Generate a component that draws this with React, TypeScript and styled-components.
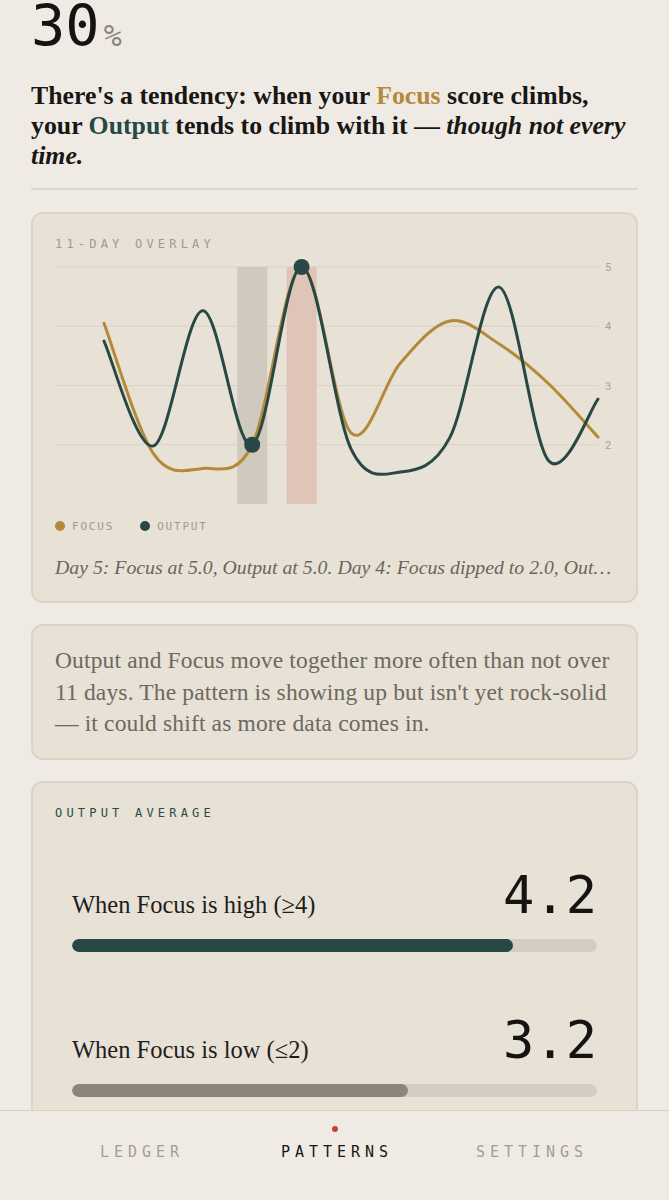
import React from 'react'
import styled, { createGlobalStyle } from 'styled-components'

const GlobalStyle = createGlobalStyle`
  html, body {
    margin: 0;
    padding: 0;
    background: #efebe4;
  }
  body {
    font-family: "Liberation Serif", serif;
    color: #1c1a17;
  }
`

const colors = {
  focus: '#b5893a',
  output: '#284845',
  muted: '#9d978d',
}

const focusData = [4.05, 1.85, 1.6, 2.0, 5.0, 2.2, 3.38, 4.09, 3.7, 3.03, 2.13]
const outputData = [3.75, 1.98, 4.26, 2.0, 5.0, 1.93, 1.54, 2.12, 4.66, 1.73, 2.77]

const chart = {
  width: 559,
  height: 250,
  top: 8,
  unit: 59.25,
  left: 49,
  step: 49.4,
  gridRight: 543,
}

const px = (i: number) => chart.left + i * chart.step
const py = (v: number) => chart.top + (5 - v) * chart.unit

// catmull-rom through every point
const smoothPath = (data: number[]) => {
  const pts = data.map((v, i) => [px(i), py(v)])
  let d = `M ${pts[0][0]} ${pts[0][1]}`
  for (let i = 0; i < pts.length - 1; i++) {
    const p0 = pts[i - 1] || pts[i]
    const p1 = pts[i]
    const p2 = pts[i + 1]
    const p3 = pts[i + 2] || p2
    const c1x = p1[0] + (p2[0] - p0[0]) / 6
    const c1y = p1[1] + (p2[1] - p0[1]) / 6
    const c2x = p2[0] - (p3[0] - p1[0]) / 6
    const c2y = p2[1] - (p3[1] - p1[1]) / 6
    d += ` C ${c1x} ${c1y}, ${c2x} ${c2y}, ${p2[0]} ${p2[1]}`
  }
  return d
}

const OverlayChart = () => (
  <ChartSvg viewBox={`0 0 ${chart.width} ${chart.height}`}>
    {[5, 4, 3, 2].map((v) => (
      <g key={v}>
        <line x1={0} x2={chart.gridRight} y1={py(v)} y2={py(v)} stroke="#d9d2c6" strokeWidth={1} />
        <AxisText x={550} y={py(v) + 4}>{v}</AxisText>
      </g>
    ))}
    <rect x={px(3) - 15} y={py(5)} width={30} height={chart.unit * 4} fill="#d0c9bd" />
    <rect x={px(4) - 15} y={py(5)} width={30} height={chart.unit * 4} fill="#dfc4b8" />
    <path d={smoothPath(focusData)} fill="none" stroke={colors.focus} strokeWidth={3} strokeLinecap="round" />
    <path d={smoothPath(outputData)} fill="none" stroke={colors.output} strokeWidth={3} strokeLinecap="round" />
    <circle cx={px(3)} cy={py(2)} r={8} fill={colors.output} />
    <circle cx={px(4)} cy={py(5)} r={8} fill={colors.output} />
  </ChartSvg>
)

const App = () => {
  return (
    <>
      <GlobalStyle />
      <Page>
        <Score>
          30<Percent>%</Percent>
        </Score>
        <Headline>
          There's a tendency: when your <Accent $color={colors.focus}>Focus</Accent> score climbs,
          your <Accent $color={colors.output}>Output</Accent> tends to climb with it — <em>though not every time.</em>
        </Headline>
        <Divider />

        <Card>
          <Eyebrow>11-DAY OVERLAY</Eyebrow>
          <OverlayChart />
          <Legend>
            <LegendItem><Dot $color={colors.focus} />FOCUS</LegendItem>
            <LegendItem><Dot $color={colors.output} />OUTPUT</LegendItem>
          </Legend>
          <Caption>Day 5: Focus at 5.0, Output at 5.0. Day 4: Focus dipped to 2.0, Output at 2.0.</Caption>
        </Card>

        <NoteCard>
          Output and Focus move together more often than not over 11 days. The pattern is showing up but
          isn't yet rock-solid — it could shift as more data comes in.
        </NoteCard>

        <Card>
          <Eyebrow $dark>OUTPUT AVERAGE</Eyebrow>
          <AvgRow>
            <AvgHead>
              <AvgLabel>When Focus is high (≥4)</AvgLabel>
              <AvgValue>4.2</AvgValue>
            </AvgHead>
            <Track>
              <Fill $color={colors.output} style={{ width: `${(4.2 / 5) * 100}%` }} />
            </Track>
          </AvgRow>
          <AvgRow>
            <AvgHead>
              <AvgLabel>When Focus is low (≤2)</AvgLabel>
              <AvgValue>3.2</AvgValue>
            </AvgHead>
            <Track>
              <Fill $color="#8a867d" style={{ width: `${(3.2 / 5) * 100}%` }} />
            </Track>
          </AvgRow>
        </Card>
      </Page>

      <TabBar>
        <Tab>LEDGER</Tab>
        <Tab $active>PATTERNS</Tab>
        <Tab>SETTINGS</Tab>
      </TabBar>
    </>
  )
}

export default App

const Page = styled.main`
    padding: 0 31px 120px;
`

const Score = styled.div`
    font-family: "DejaVu Sans Mono", monospace;
    font-size: 57px;
    line-height: 52px;
    color: #151412;
`

const Percent = styled.span`
    font-size: 30px;
    line-height: 1;
    color: #8a857d;
    margin-left: 4px;
`

const Headline = styled.p`
    margin: 29px 0 0;
    font-size: 25.8px;
    line-height: 30px;
    font-weight: bold;
    color: #191714;

    em {
        font-style: italic;
    }
`

const Accent = styled.span<{ $color: string }>`
    color: ${(p) => p.$color};
`

const Divider = styled.hr`
    border: 0;
    border-top: 2px solid #dbd6ce;
    margin: 17px 0 22px;
`

const Card = styled.section`
    background: #e7e1d6;
    border: 2px solid #dbd4c8;
    border-radius: 12px;
    padding: 22px 22px 22px;
    margin-bottom: 21px;
`

const Eyebrow = styled.div<{ $dark?: boolean }>`
    font-family: "DejaVu Sans Mono", monospace;
    font-size: 12px;
    line-height: 16px;
    letter-spacing: 4.2px;
    color: ${(p) => (p.$dark ? '#2c4a47' : '#a09a90')};
`

const ChartSvg = styled.svg`
    display: block;
    width: 100%;
    height: 250px;
    margin-top: 7px;
`

const AxisText = styled.text`
    font-family: Roboto, "Liberation Sans", sans-serif;
    font-size: 11px;
    fill: #a8a198;
`

const Legend = styled.div`
    display: flex;
    gap: 26px;
    margin-top: 10px;
    height: 14px;
    align-items: center;
`

const LegendItem = styled.span`
    display: flex;
    align-items: center;
    gap: 7px;
    font-family: "DejaVu Sans Mono", monospace;
    font-size: 11px;
    letter-spacing: 1.8px;
    color: #a09a90;
`

const Dot = styled.span<{ $color: string }>`
    width: 10px;
    height: 10px;
    border-radius: 50%;
    background: ${(p) => p.$color};
`

const Caption = styled.p`
    margin: 22px 0 0;
    font-size: 19.8px;
    line-height: 24px;
    font-style: italic;
    color: #6b655c;
    white-space: nowrap;
    overflow: hidden;
    text-overflow: ellipsis;
`

const NoteCard = styled(Card)`
    padding: 19px 22px 18px;
    font-size: 23.5px;
    line-height: 31.5px;
    letter-spacing: 0.15px;
    color: #6e685f;
`

const AvgRow = styled.div`
    padding: 0 17px;
    margin-top: 48px;

    & + & {
        margin-top: 62px;
    }
`

const AvgHead = styled.div`
    display: flex;
    justify-content: space-between;
    align-items: baseline;
`

const AvgLabel = styled.span`
    font-size: 24.5px;
    color: #1f1d1a;
`

const AvgValue = styled.span`
    font-family: "DejaVu Sans Mono", monospace;
    font-size: 52px;
    line-height: 1;
    color: #151412;
`

const Track = styled.div`
    margin-top: 18px;
    height: 13px;
    border-radius: 7px;
    background: #d3cec3;
    overflow: hidden;
`

const Fill = styled.div<{ $color: string }>`
    height: 100%;
    border-radius: 7px;
    background: ${(p) => p.$color};
`

const TabBar = styled.nav`
    position: fixed;
    left: 0;
    right: 0;
    bottom: 0;
    height: 89px;
    background: #efebe4;
    border-top: 1px solid #d6d0c5;
    display: grid;
    grid-template-columns: repeat(3, 1fr);
    padding: 0 42px;
`

const Tab = styled.div<{ $active?: boolean }>`
    position: relative;
    text-align: center;
    padding-top: 31px;
    font-family: "DejaVu Sans Mono", monospace;
    font-size: 15px;
    line-height: 20px;
    letter-spacing: 5px;
    text-indent: 5px;
    color: ${(p) => (p.$active ? '#161513' : '#a39d94')};
    font-weight: ${(p) => (p.$active ? 500 : 400)};

    &::before {
        content: '';
        display: ${(p) => (p.$active ? 'block' : 'none')};
        position: absolute;
        top: 15px;
        left: 50%;
        width: 6px;
        height: 6px;
        margin-left: -3px;
        border-radius: 50%;
        background: #c4432e;
    }
`
